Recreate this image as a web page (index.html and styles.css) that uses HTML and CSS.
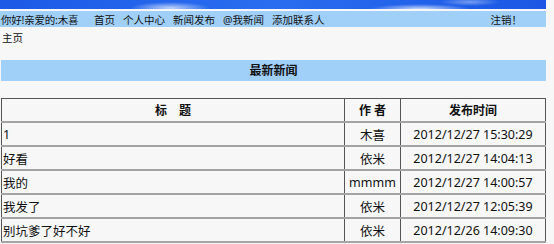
FILE: index.html
```html
<!DOCTYPE html>
<html lang="zh-CN">
<head>
    <meta charset="UTF-8">
    <title>主页</title>
    <link rel="stylesheet" href="styles.css">
</head>
<body>

    <div class="page">
        <!-- 顶部横幅 -->
        <div class="banner"></div>

        <!-- 导航 -->
        <div class="nav">
            <span class="welcome">你好!亲爱的:木喜</span>
            <a href="#">首页</a>
            <a href="#">个人中心</a>
            <a href="#">新闻发布</a>
            <a href="#">@我新闻</a>
            <a href="#">添加联系人</a>
            <a href="#" class="logout">注销！</a>
        </div>

        <div class="crumb">主页</div>

        <div class="title-bar">最新新闻</div>

        <!-- 新闻列表 -->
        <table class="news">
            <tr>
                <th class="col-title">标　题</th>
                <th class="col-author">作 者</th>
                <th class="col-time">发布时间</th>
            </tr>
            <tr>
                <td>1</td>
                <td class="center">木喜</td>
                <td class="center">2012/12/27 15:30:29</td>
            </tr>
            <tr>
                <td>好看</td>
                <td class="center">依米</td>
                <td class="center">2012/12/27 14:04:13</td>
            </tr>
            <tr>
                <td>我的</td>
                <td class="center">mmmm</td>
                <td class="center">2012/12/27 14:00:57</td>
            </tr>
            <tr>
                <td>我发了</td>
                <td class="center">依米</td>
                <td class="center">2012/12/27 12:05:39</td>
            </tr>
            <tr>
                <td>别坑爹了好不好</td>
                <td class="center">依米</td>
                <td class="center">2012/12/26 14:09:30</td>
            </tr>
        </table>
    </div>

</body>
</html>
```

FILE: styles.css
```css
body {
    margin: 0;
    background-color: #f7f7f7;
    color: #111;
    font-family: "Noto Sans", "Noto Sans CJK SC", sans-serif;
}

.page {
    width: 546px;
}

.banner {
    height: 9px;
    background:
        radial-gradient(ellipse 40px 6px at 170px 8px, rgba(255, 255, 255, 0.7), transparent),
        radial-gradient(ellipse 50px 5px at 420px 9px, rgba(255, 255, 255, 0.75), transparent),
        radial-gradient(ellipse 30px 4px at 470px 2px, rgba(255, 255, 255, 0.4), transparent),
        linear-gradient(to right, #1c5ae6, #2a6df0 50%, #1b57e4);
    border-bottom: 2px solid #f7f7f7;
}

.nav {
    display: flex;
    align-items: center;
    height: 16px;
    background-color: #a0cff8;
    font-size: 10.5px;
    padding-left: 1px;
    padding-right: 24px;
    gap: 8px;
}

.nav a {
    color: #111;
    text-decoration: none;
}

.welcome {
    width: 77px;
    margin-right: 8px;
    letter-spacing: -0.2px;
    white-space: nowrap;
}

.nav .logout {
    margin-left: auto;
}

.crumb {
    font-size: 10.5px;
    padding: 4px 0 0 2px;
    height: 29px;
    line-height: 14px;
}

.title-bar {
    margin-left: 1px;
    height: 21px;
    line-height: 21px;
    background-color: #a0cff8;
    text-align: center;
    font-size: 12px;
    font-weight: bold;
}

.news {
    margin: 17px 0 0 1px;
    width: 545px;
    border-collapse: collapse;
    border: 1px solid #555;
    font-size: 12.5px;
}

.news th,
.news td {
    height: 22px;
    padding: 0 1px;
    border-bottom: 2px solid #a4a4a4;
    border-right: 1px solid #555;
}

.news th {
    font-size: 12px;
    font-weight: bold;
}

.col-title {
    width: 340px;
}

.col-author {
    width: 53px;
}

.center {
    text-align: center;
}
```
